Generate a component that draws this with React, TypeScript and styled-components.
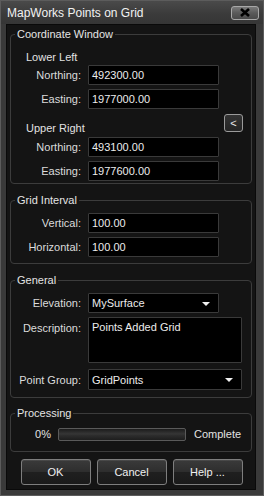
import React from 'react';
import styled, { createGlobalStyle } from 'styled-components';

const GlobalStyle = createGlobalStyle`
html, body {
  margin: 0;
  padding: 0;
  background: #141414;
}
`;

const Window = styled.div`
width: 264px;
height: 496px;
box-sizing: border-box;
display: flex;
flex-direction: column;
background: #3a3a3a;
border: 1px solid #5c5c5c;
font-family: "Liberation Sans", Arial, sans-serif;
font-size: 11px;
color: #e2e2e2;
`;

const TitleBar = styled.div`
height: 23px;
flex-shrink: 0;
display: flex;
align-items: center;
justify-content: space-between;
padding: 0 4px 0 6px;
background: linear-gradient(#4a4a4a, #3a3a3a 60%, #363636);
`;

const Title = styled.div`
font-size: 12px;
color: #f2f2f2;
`;

const CloseButton = styled.div`
width: 28px;
height: 14px;
box-sizing: border-box;
display: flex;
align-items: center;
justify-content: center;
border: 1px solid #a8a8a8;
border-radius: 3px;
background: linear-gradient(#7a7a7a, #5a5a5a 50%, #4a4a4a);
`;

const Body = styled.div`
flex: 1;
margin: 0 7px 5px 5px;
padding: 2px 3px 0 3px;
display: flex;
flex-direction: column;
background: #141414;
border: 1px solid #0a0a0a;
`;

const Group = styled.fieldset<{ $top?: number; $pb?: number }>`
margin: ${p => p.$top ?? 0}px 0 0 0;
padding: 0 0 ${p => p.$pb ?? 6}px 0;
border: 1px solid #3c3c3c;
border-radius: 4px;
min-width: 0;
`;

const Legend = styled.legend`
margin-left: 4px;
padding: 0 2px;
font-size: 11px;
line-height: 14px;
color: #e4e4e4;
`;

const SubHeading = styled.div<{ $top?: number }>`
margin-top: ${p => p.$top ?? 0}px;
padding-left: 15px;
line-height: 14px;
`;

const HeadingRow = styled.div`
margin-top: 5px;
height: 21px;
display: flex;
justify-content: space-between;
align-items: flex-end;
padding: 0 8px 0 15px;
line-height: 14px;
`;

const PickButton = styled.div`
align-self: flex-start;
width: 19px;
height: 18px;
box-sizing: border-box;
display: flex;
align-items: center;
justify-content: center;
border: 1px solid #9a9a9a;
border-radius: 3px;
background: linear-gradient(#333, #242424);
color: #e8e8e8;
font-size: 11px;
`;

const FieldRow = styled.div<{ $top?: number; $alignTop?: boolean }>`
margin-top: ${p => p.$top ?? 4}px;
display: flex;
align-items: ${p => (p.$alignTop ? 'flex-start' : 'center')};
gap: 7px;
`;

const Label = styled.div<{ $pt?: number }>`
width: 70px;
flex-shrink: 0;
text-align: right;
line-height: 14px;
padding-top: ${p => p.$pt ?? 0}px;
color: #dcdcdc;
`;

const TextBox = styled.div<{ $w?: number; $h?: number }>`
width: ${p => p.$w ?? 131}px;
height: ${p => p.$h ?? 20}px;
box-sizing: border-box;
padding: 2px 3px;
background: #000;
border: 1px solid #3a3a3a;
border-radius: 1px;
color: #ececec;
line-height: 14px;
`;

const Select = styled(TextBox)`
display: flex;
align-items: center;
justify-content: space-between;
padding: 0 8px 0 3px;
`;

const Arrow = styled.span`
width: 0;
height: 0;
border-left: 4px solid transparent;
border-right: 4px solid transparent;
border-top: 4px solid #f0f0f0;
margin-top: 1px;
`;

const ProgressRow = styled.div`
margin-top: 7px;
display: flex;
align-items: center;
`;

const ProgressLabel = styled.div`
width: 40px;
text-align: right;
margin-right: 7px;
line-height: 14px;
`;

const ProgressBar = styled.div`
width: 128px;
height: 13px;
box-sizing: border-box;
margin-right: 8px;
border: 1px solid #5a5a5a;
border-radius: 2px;
background: linear-gradient(#1c1c1c, #363636 45%, #2c2c2c 60%, #1e1e1e);
`;

const ButtonRow = styled.div`
margin-top: 7px;
display: flex;
justify-content: center;
gap: 6px;
padding-left: 1px;
`;

const Button = styled.div`
width: 70px;
height: 26px;
box-sizing: border-box;
display: flex;
align-items: center;
justify-content: center;
border: 1px solid #7e7e7e;
border-radius: 3px;
background: linear-gradient(#3a3a3a, #2e2e2e 48%, #1f1f1f 52%, #1a1a1a);
box-shadow: inset 0 1px 0 rgba(255, 255, 255, 0.08);
color: #f0f0f0;
font-size: 11px;
`;

function CloseIcon() {
  return (
    <svg width="12" height="9" viewBox="0 0 12 9">
      <path d="M2 1 L10 8 M10 1 L2 8" stroke="#000" strokeWidth="2.6" />
    </svg>
  );
}

function Field({ label, value, top }: { label: string; value: string; top?: number }) {
  return (
    <FieldRow $top={top}>
      <Label>{label}</Label>
      <TextBox>{value}</TextBox>
    </FieldRow>
  );
}

export default function App() {
  return (
    <>
      <GlobalStyle />
      <Window>
        <TitleBar>
          <Title>MapWorks Points on Grid</Title>
          <CloseButton>
            <CloseIcon />
          </CloseButton>
        </TitleBar>
        <Body>
          <Group $pb={2}>
            <Legend>Coordinate Window</Legend>
            <SubHeading $top={9}>Lower Left</SubHeading>
            <Field label="Northing:" value="492300.00" top={1} />
            <Field label="Easting:" value="1977000.00" />
            <HeadingRow>
              <span>Upper Right</span>
              <PickButton>&lt;</PickButton>
            </HeadingRow>
            <Field label="Northing:" value="493100.00" top={2} />
            <Field label="Easting:" value="1977600.00" />
          </Group>

          <Group $top={9}>
            <Legend>Grid Interval</Legend>
            <Field label="Vertical:" value="100.00" top={6} />
            <Field label="Horizontal:" value="100.00" />
          </Group>

          <Group $top={9} $pb={7}>
            <Legend>General</Legend>
            <FieldRow $top={6}>
              <Label>Elevation:</Label>
              <Select $w={131}>
                <span>MySurface</span>
                <Arrow />
              </Select>
            </FieldRow>
            <FieldRow $alignTop>
              <Label $pt={4}>Description:</Label>
              <TextBox $w={154} $h={46}>Points Added Grid</TextBox>
            </FieldRow>
            <FieldRow $top={6}>
              <Label>Point Group:</Label>
              <Select $w={154} $h={21}>
                <span>GridPoints</span>
                <Arrow />
              </Select>
            </FieldRow>
          </Group>

          <Group $top={8} $pb={10}>
            <Legend>Processing</Legend>
            <ProgressRow>
              <ProgressLabel>0%</ProgressLabel>
              <ProgressBar />
              <span>Complete</span>
            </ProgressRow>
          </Group>

          <ButtonRow>
            <Button>OK</Button>
            <Button>Cancel</Button>
            <Button>Help ...</Button>
          </ButtonRow>
        </Body>
      </Window>
    </>
  );
}
